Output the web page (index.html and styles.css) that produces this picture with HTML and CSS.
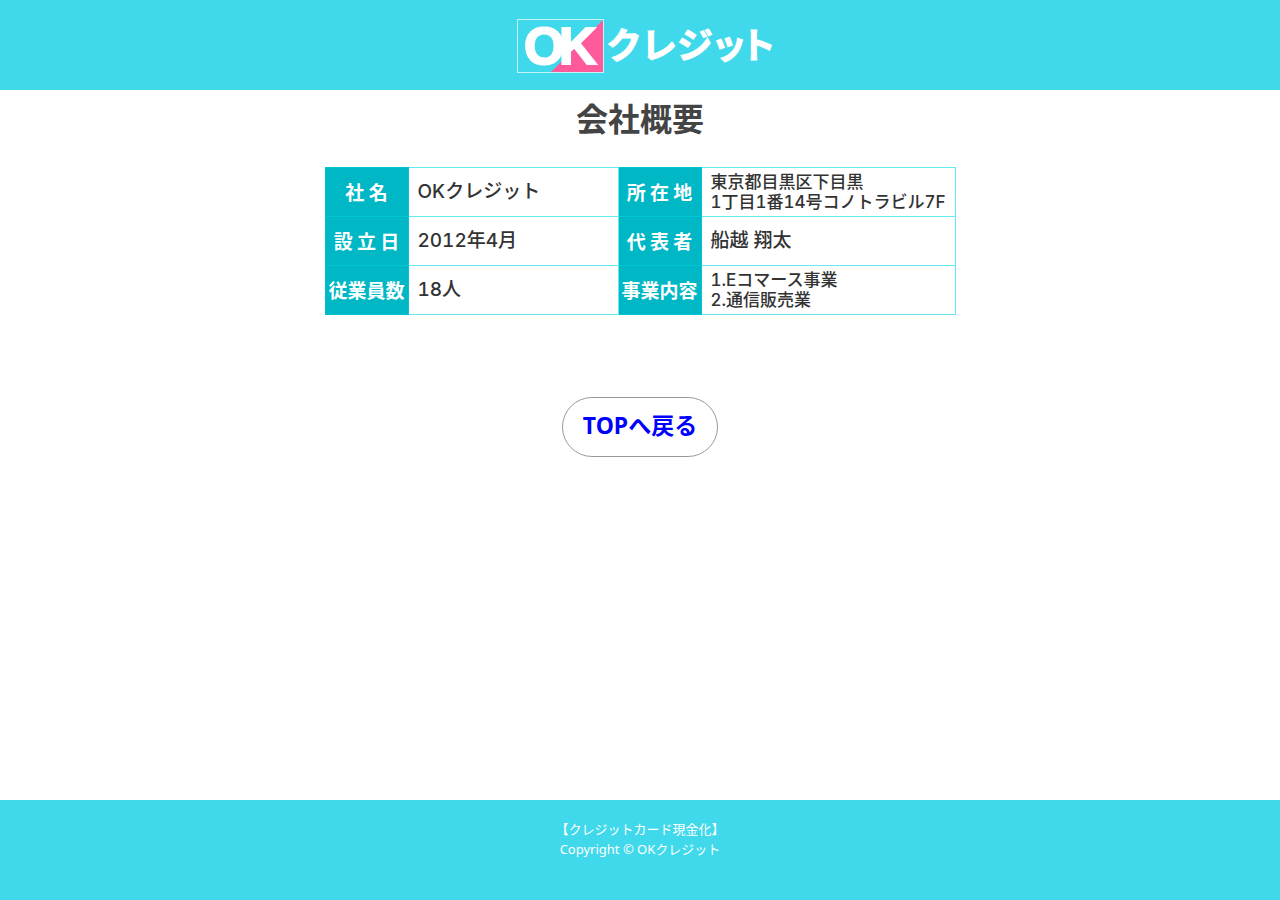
FILE: index.html
```
<!DOCTYPE html>
<html lang="ja">
<head>
    <meta charset="UTF-8">
    <meta name="viewport" content="width=device-width, initial-scale=1.0">
    <title>会社概要 | OKクレジット</title>
    <link rel="stylesheet" href="styles.css">
</head>
<body>
    <header class="header">
        <svg class="logo" width="268" height="56" viewBox="0 0 268 56" role="img" aria-label="OKクレジット">
            <path d="M88 1V54H35Z" fill="#ff5a9b"/>
            <rect x="1.5" y="1.5" width="86" height="53" fill="none" stroke="#c4f4fa"/>
            <text class="logo-mark" x="8 43" y="46">OK</text>
            <text class="logo-name" x="90 125 161 195 224" y="41">クレジット</text>
        </svg>
    </header>

    <main class="main">
        <h1 class="title">会社概要</h1>
        <table class="company">
            <tr>
                <th scope="row">社 名</th>
                <td>OKクレジット</td>
                <th scope="row">所 在 地</th>
                <td class="small">東京都目黒区下目黒<br>1丁目1番14号コノトラビル7F</td>
            </tr>
            <tr>
                <th scope="row">設 立 日</th>
                <td>2012年4月</td>
                <th scope="row">代 表 者</th>
                <td>船越 翔太</td>
            </tr>
            <tr>
                <th scope="row">従業員数</th>
                <td>18人</td>
                <th scope="row">事業内容</th>
                <td class="small">1.Eコマース事業<br>2.通信販売業</td>
            </tr>
        </table>
        <a class="back" href="index.html">TOPへ戻る</a>
    </main>

    <footer class="footer">
        <p>【クレジットカード現金化】</p>
        <p>Copyright © OKクレジット</p>
    </footer>
</body>
</html>
```
FILE: styles.css
```
* {
    box-sizing: border-box;
}
body {
    display: flex;
    flex-direction: column;
    min-height: 100vh;
    margin: 0;
    font-family: "Noto Sans", "Noto Sans CJK JP", sans-serif;
    color: #444;
    background-color: #fff;
}
.header {
    display: flex;
    justify-content: center;
    padding: 18px 0 16px 20px;
    background-color: #40d9eb;
}
.logo {
    display: block;
}
.logo-mark {
    font-family: "Liberation Sans", sans-serif;
    font-size: 52px;
    font-weight: bold;
    fill: #fff;
    stroke: #fff;
    stroke-width: 2px;
}
.logo-name {
    font-family: "Noto Sans CJK JP", sans-serif;
    font-size: 36px;
    font-weight: bold;
    fill: #fff;
    stroke: #fff;
    stroke-width: 1px;
}
.main {
    display: flex;
    flex: 1;
    flex-direction: column;
    align-items: center;
}
.title {
    margin: 5px 0 24px;
    font-size: 32px;
    line-height: 48px;
}
.company {
    width: 100%;
    max-width: 631px;
    table-layout: fixed;
    border-collapse: collapse;
    font-family: Inter, "Noto Sans CJK JP", sans-serif;
    font-size: 19px;
    font-weight: 500;
    font-variant-numeric: tabular-nums;
    line-height: 24px;
    color: #333;
}
.company th,
.company td {
    height: 49px;
    padding: 0;
    border: 1px solid #66eaf2;
}
.company th {
    width: 83px;
    font-family: "Noto Sans CJK JP", sans-serif;
    font-weight: bold;
    color: #fff;
    text-align: center;
    white-space: nowrap;
    background-color: #00b7c5;
    border-color: #00c5d2;
}
.company td {
    padding-left: 9px;
}
.company td:nth-child(2) {
    width: 210px;
}
.company .small {
    font-size: 17px;
    line-height: 20px;
    white-space: nowrap;
}
.back {
    margin: 82px 0 40px;
    padding: 12px 20px 16px;
    border: 1px solid #999;
    border-radius: 30px;
    font-size: 23px;
    font-weight: bold;
    line-height: 30px;
    color: #00f;
    text-decoration: none;
}
.footer {
    min-height: 100px;
    padding: 19px 0;
    font-size: 13px;
    line-height: 20px;
    color: #fff;
    text-align: center;
    background-color: #40d9eb;
}
.footer p {
    margin: 0;
}
```
